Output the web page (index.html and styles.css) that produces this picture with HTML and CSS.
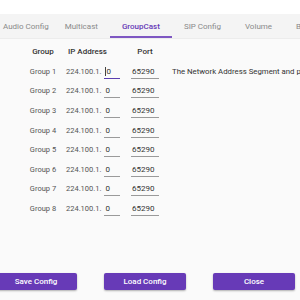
FILE: index.html
```html
<!DOCTYPE html>
<html lang="en">

<head>
  <meta charset="UTF-8">
  <meta name="viewport" content="width=device-width, initial-scale=1.0">
  <title>GroupCast</title>
  <link rel="stylesheet" href="styles.css">
</head>

<body>
  <div class="page">
    <div class="tabs">
      <div class="tab">Audio Config</div>
      <div class="tab">Multicast</div>
      <div class="tab active">GroupCast</div>
      <div class="tab">SIP Config</div>
      <div class="tab">Volume</div>
      <div class="tab">Buttons</div>
    </div>

    <div class="content">
      <div class="grupos">
        <div class="fila cabecera">
          <div class="col-grupo">Group</div>
          <div class="col-ip">IP Address</div>
          <div class="col-puerto">Port</div>
        </div>

        <div class="fila">
          <div class="col-grupo">Group 1</div>
          <div class="col-ip">224.100.1.<span class="campo corto foco"><i class="cursor"></i>0</span></div>
          <div class="col-puerto"><span class="campo">65290</span></div>
          <div class="nota">The Network Address Segment and port of the group broadcast</div>
        </div>
        <div class="fila">
          <div class="col-grupo">Group 2</div>
          <div class="col-ip">224.100.1.<span class="campo corto">0</span></div>
          <div class="col-puerto"><span class="campo">65290</span></div>
        </div>
        <div class="fila">
          <div class="col-grupo">Group 3</div>
          <div class="col-ip">224.100.1.<span class="campo corto">0</span></div>
          <div class="col-puerto"><span class="campo">65290</span></div>
        </div>
        <div class="fila">
          <div class="col-grupo">Group 4</div>
          <div class="col-ip">224.100.1.<span class="campo corto">0</span></div>
          <div class="col-puerto"><span class="campo">65290</span></div>
        </div>
        <div class="fila">
          <div class="col-grupo">Group 5</div>
          <div class="col-ip">224.100.1.<span class="campo corto">0</span></div>
          <div class="col-puerto"><span class="campo">65290</span></div>
        </div>
        <div class="fila">
          <div class="col-grupo">Group 6</div>
          <div class="col-ip">224.100.1.<span class="campo corto">0</span></div>
          <div class="col-puerto"><span class="campo">65290</span></div>
        </div>
        <div class="fila">
          <div class="col-grupo">Group 7</div>
          <div class="col-ip">224.100.1.<span class="campo corto">0</span></div>
          <div class="col-puerto"><span class="campo">65290</span></div>
        </div>
        <div class="fila">
          <div class="col-grupo">Group 8</div>
          <div class="col-ip">224.100.1.<span class="campo corto">0</span></div>
          <div class="col-puerto"><span class="campo">65290</span></div>
        </div>
      </div>
    </div>

    <div class="botones">
      <button class="btn">Save Config</button>
      <button class="btn">Load Config</button>
      <button class="btn">Close</button>
    </div>
  </div>
</body>

</html>
```

FILE: styles.css
```css
html,
body {
  margin: 0;
  padding: 0;
  width: 300px;
  height: 300px;
  overflow: hidden;
}

body {
  font-family: Roboto, 'Liberation Sans', sans-serif;
  font-size: 8px;
  background-color: #fafafa;
  color: #555;
}

.page {
  display: flex;
  flex-direction: column;
  height: 300px;
  border-top: 14px solid #ffffff;
  box-sizing: border-box;
}

.tabs {
  display: flex;
  height: 24px;
  margin-left: -8px;
  background-color: #f4f4f4;
  border-bottom: 1px solid #ececec;
  white-space: nowrap;
}

.tab {
  flex: none;
  display: flex;
  align-items: center;
  padding: 0 12px;
  color: #8a8a8a;
  box-sizing: border-box;
}

.tab:first-child {
  padding: 0 4px 0 11px;
}

.tab.active {
  color: #673ab7;
  font-weight: 500;
  border-bottom: 2px solid #7e57c2;
  padding-top: 2px;
}

.content {
  flex: 1;
  padding: 3px 0 0 28px;
}

.grupos {
  display: flex;
  flex-direction: column;
}

.fila {
  display: flex;
  align-items: center;
  height: 19.6px;
  white-space: nowrap;
  font-size: 7.5px;
}

.cabecera {
  height: 19px;
  color: #333;
  font-size: 8px;
  font-weight: 500;
}

.cabecera + .fila {
  margin-top: 0.5px;
}

.col-grupo {
  flex: none;
  width: 30px;
  text-align: center;
}

.col-ip {
  flex: none;
  width: 56px;
  margin-left: 8px;
}

.cabecera .col-ip {
  padding-left: 2px;
  box-sizing: border-box;
}

.col-puerto {
  flex: none;
  width: 34px;
  margin-left: 6px;
  text-align: center;
}

.nota {
  flex: none;
  margin-left: 10px;
  color: #333;
  font-size: 7.8px;
}

.campo {
  display: inline-block;
  width: 28px;
  padding: 3px 0 2px 1px;
  border-bottom: 1px solid #9a9a9a;
  text-align: left;
  color: #333;
  font-size: 8px;
  box-sizing: border-box;
}

.campo.corto {
  width: 16px;
  margin-left: 3px;
}

.campo.foco {
  border-bottom-color: #5b3fb0;
}

.cursor {
  display: inline-block;
  width: 1px;
  height: 9px;
  background-color: #444;
  vertical-align: -2px;
}

.botones {
  display: flex;
  gap: 27px;
  margin: 0 0 10px -5px;
}

.btn {
  flex: none;
  width: 82px;
  height: 17px;
  padding: 0;
  background-color: #673ab7;
  color: #fff;
  border: none;
  border-radius: 2px;
  font-family: Roboto, 'Liberation Sans', sans-serif;
  font-size: 8px;
  font-weight: 500;
  box-shadow: 0 1px 2px rgba(0, 0, 0, 0.3);
}
```
